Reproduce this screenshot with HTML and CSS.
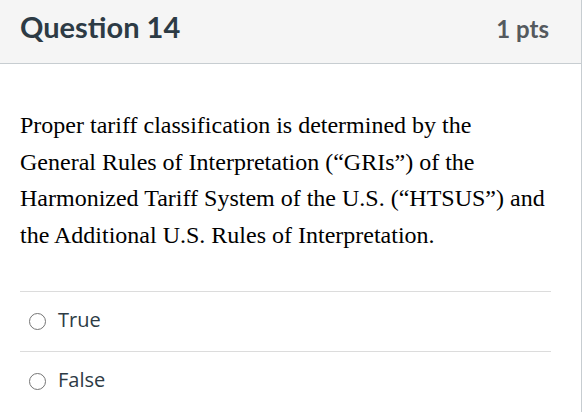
FILE: index.html
```html
<!DOCTYPE html>
<html>
<head>
<meta charset="utf-8">
<link rel="stylesheet" href="styles.css">
</head>
<body>
<div class="question">
  <div class="header">
    <h2 class="title">Question 14</h2>
    <span class="points">1 pts</span>
  </div>
  <div class="content">
    <p class="text">Proper tariff classification is determined by the General Rules of Interpretation (“GRIs”) of the Harmonized Tariff System of the U.S. (“HTSUS”) and the Additional U.S. Rules of Interpretation.</p>
    <div class="answers">
      <label class="answer"><span class="radio"></span><span class="label">True</span></label>
      <label class="answer"><span class="radio"></span><span class="label">False</span></label>
    </div>
  </div>
</div>
</body>
</html>
```
FILE: styles.css
```css
html, body {
  margin: 0;
  padding: 0;
  background: #ffffff;
}
.question {
  width: 581px;
  height: 412px;
  border-right: 1px solid #c7cdd1;
}
.header {
  height: 64px;
  box-sizing: border-box;
  background: #f5f5f5;
  border-bottom: 1px solid #c7cdd1;
  display: flex;
  align-items: baseline;
  justify-content: space-between;
  padding: 9px 32px 0 20px;
}
.title {
  margin: 0;
  font-family: Lato, "Liberation Sans", sans-serif;
  font-weight: 700;
  font-size: 29px;
  line-height: normal;
  color: #2d3b45;
}
.points {
  font-family: Lato, "Liberation Sans", sans-serif;
  font-weight: 700;
  font-size: 24px;
  color: #555a5e;
}
.content {
  padding: 43px 30px 0 20px;
}
.text {
  margin: 0;
  font-family: "Liberation Serif", "Times New Roman", serif;
  font-size: 24px;
  line-height: 36.5px;
  color: #000;
}
.answers {
  margin-top: 38px;
}
.answer {
  display: flex;
  align-items: center;
  height: 59px;
  border-top: 1px solid #dcdcdc;
  padding-left: 9px;
  gap: 12px;
  font-family: "Open Sans", "Noto Sans", sans-serif;
  font-size: 20px;
  color: #2d3b45;
}
.radio {
  width: 17px;
  height: 17px;
  border: 1.5px solid #757575;
  border-radius: 50%;
  box-sizing: border-box;
}
.label {
  position: relative;
  top: -2px;
}
```
